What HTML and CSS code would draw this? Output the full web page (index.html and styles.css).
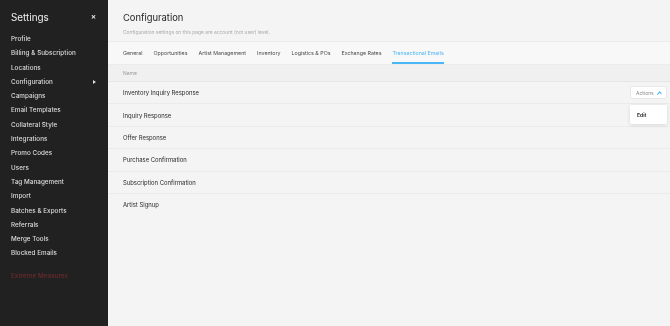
FILE: index.html
```html
<!DOCTYPE html>
<html lang="en">
<head>
  <meta charset="UTF-8" />
  <title>Configuration</title>
  <link rel="stylesheet" href="styles.css">
</head>
<body>
  <aside class="sidebar">
    <div class="side-head">
      <h2>Settings</h2>
      <span class="close">&#x2715;</span>
    </div>
    <nav class="side-nav">
      <a>Profile</a>
      <a>Billing &amp; Subscription</a>
      <a>Locations</a>
      <a class="has-sub">Configuration <span class="arrow"></span></a>
      <a>Campaigns</a>
      <a>Email Templates</a>
      <a>Collateral Style</a>
      <a>Integrations</a>
      <a>Promo Codes</a>
      <a>Users</a>
      <a>Tag Management</a>
      <a>Import</a>
      <a>Batches &amp; Exports</a>
      <a>Referrals</a>
      <a>Merge Tools</a>
      <a>Blocked Emails</a>
      <a class="danger">Extreme Measures</a>
    </nav>
  </aside>

  <main class="main">
    <header class="page-head">
      <h1>Configuration</h1>
      <p>Configuration settings on this page are account (not user) level.</p>
    </header>

    <div class="tabs">
      <a>General</a>
      <a>Opportunities</a>
      <a>Artist Management</a>
      <a>Inventory</a>
      <a>Logistics &amp; POs</a>
      <a>Exchange Rates</a>
      <a class="active">Transactional Emails</a>
    </div>

    <div class="table">
      <div class="th">Name</div>
      <div class="row">
        <span>Inventory Inquiry Response</span>
        <div class="actions">
          <button class="btn">Actions <span class="caret"></span></button>
          <div class="menu"><a>Edit</a></div>
        </div>
      </div>
      <div class="row"><span>Inquiry Response</span></div>
      <div class="row"><span>Offer Response</span></div>
      <div class="row"><span>Purchase Confirmation</span></div>
      <div class="row"><span>Subscription Confirmation</span></div>
      <div class="row last"><span>Artist Signup</span></div>
    </div>
  </main>
</body>
</html>
```

FILE: styles.css
```css
body {
  margin: 0;
  display: flex;
  height: 326px;
  overflow: hidden;
  font-family: Inter, "Liberation Sans", sans-serif;
  background: #f4f4f4;
}

/* force grayscale text rendering */
.sidebar, .main {
  will-change: transform;
}

.sidebar {
  width: 108px;
  flex-shrink: 0;
  background: #212121;
  color: #e4e4e4;
}

.side-head {
  display: flex;
  justify-content: space-between;
  align-items: center;
  padding: 9px 12px 0 11px;
  height: 15px;
}

.side-head h2 {
  margin: 0;
  font-size: 9.9px;
  font-weight: 400;
  color: #f2f2f2;
}

.close {
  font-size: 6px;
  font-weight: 700;
  color: #eee;
}

.side-nav {
  display: flex;
  flex-direction: column;
  padding: 8px 11px 0 11px;
}

.side-nav a {
  height: 14.3px;
  line-height: 14.3px;
  font-size: 6.3px;
  font-weight: 500;
  color: #dcdcdc;
  letter-spacing: 0.05px;
}

.side-nav .has-sub {
  display: flex;
  justify-content: space-between;
  align-items: center;
}

.arrow {
  width: 0;
  height: 0;
  border-top: 2.5px solid transparent;
  border-bottom: 2.5px solid transparent;
  border-left: 3px solid #ddd;
  margin-right: 1px;
}

.side-nav .danger {
  margin-top: 8px;
  color: #6e2a2a;
}

.main {
  flex: 1;
  display: flex;
  flex-direction: column;
}

.page-head {
  padding: 12px 15px 0 15px;
  height: 29px;
}

.page-head h1 {
  margin: 0;
  font-size: 9.4px;
  font-weight: 400;
  color: #1e1e1e;
}

.page-head p {
  margin: 6px 0 0;
  font-size: 4.9px;
  color: #ababab;
}

.tabs {
  display: flex;
  gap: 11px;
  padding: 0 15px;
  height: 22px;
  background: #f8f8f8;
  border-top: 1px solid #ececec;
  border-bottom: 1px solid #ececec;
}

.tabs a {
  font-size: 5.3px;
  line-height: 21px;
  padding-top: 1px;
  box-sizing: border-box;
  border-bottom: 2px solid transparent;
  color: #4a4a4a;
}

.tabs a.active {
  color: #49b6f5;
  border-bottom-color: #49b6f5;
}

.table {
  display: flex;
  flex-direction: column;
}

.th {
  height: 16px;
  line-height: 17px;
  padding: 0 15px;
  font-size: 5px;
  color: #9a9a9a;
  background: #f0f0f0;
  border-bottom: 1px solid #e6e6e6;
}

.row {
  display: flex;
  justify-content: space-between;
  align-items: center;
  height: 21.4px;
  padding: 0 3px 0 15px;
  font-size: 5.9px;
  color: #2a2a2a;
  border-bottom: 1px solid #ebebeb;
}

.row:first-of-type span {
  margin-top: -1px;
}

.row.last {
  border-bottom: none;
}

.actions {
  position: relative;
}

.btn {
  display: flex;
  align-items: center;
  gap: 4px;
  width: 37px;
  height: 13px;
  padding: 0 5px;
  background: #fff;
  border: 1px solid #e8e8e8;
  border-radius: 2px;
  font-family: inherit;
  font-size: 5px;
  color: #8a8a8a;
}

.caret {
  width: 2.5px;
  height: 2.5px;
  border-top: 1px solid #49b6f5;
  border-left: 1px solid #49b6f5;
  transform: rotate(45deg);
  margin-top: 2px;
}

.menu {
  position: absolute;
  top: 19px;
  right: 0;
  width: 37px;
  height: 19px;
  background: #fff;
  border-radius: 2px;
  box-shadow: 0 1px 4px rgba(0, 0, 0, 0.12);
  display: flex;
  align-items: center;
  padding-left: 7px;
  box-sizing: border-box;
}

.menu a {
  font-size: 5px;
  font-weight: 700;
  color: #333;
}
```
